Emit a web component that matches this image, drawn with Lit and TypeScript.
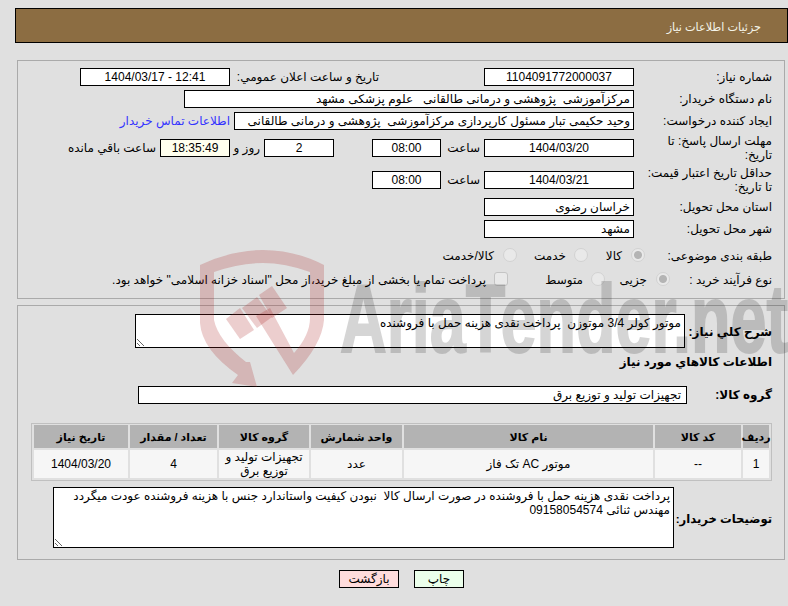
import { LitElement, html, css, svg } from 'lit';
import { customElement } from 'lit/decorators.js';

const columns = ['ردیف', 'کد کالا', 'نام کالا', 'واحد شمارش', 'گروه کالا', 'تعداد / مقدار', 'تاریخ نیاز'];
const items = [['1', '--', 'موتور AC تک فاز', 'عدد', 'تجهیزات تولید و توزیع برق', '4', '1404/03/20']];

@customElement('app-root')
export class AppRoot extends LitElement {
  static styles = css`
    :host {
      display: block;
      position: relative;
      width: 788px;
      height: 606px;
      overflow: hidden;
      background: #e0e0e0;
      font-family: 'Liberation Sans', 'DejaVu Sans', sans-serif;
      font-size: 12px;
      line-height: 14px;
      color: #000;
    }

    .page {
      direction: rtl;
      padding-top: 8px;
    }

    .title {
      height: 35px;
      box-sizing: border-box;
      margin-left: 15px;
      padding: 11px 26px 0 0;
      background: #8c6d42;
      border: 1px solid #000;
      color: #f4f4e8;
      font-size: 11.2px;
    }

    .panel {
      box-sizing: border-box;
      width: 768px;
      margin-right: 3px;
      border: 1px solid #aaa;
    }

    .info {
      height: 239px;
      margin-top: 17px;
      padding: 7px 12px 0 0;
      display: flex;
      flex-direction: column;
      gap: 4px;
    }

    .row {
      display: flex;
      align-items: center;
      min-height: 18px;
      white-space: nowrap;
    }

    .tall {
      height: 28px;
    }

    .label {
      flex: none;
      width: 138px;
    }

    .field {
      flex: none;
      box-sizing: border-box;
      height: 18px;
      width: 150px;
      padding: 0 3px;
      background: #fff;
      border: 1px solid #000;
      line-height: 17px;
      white-space: pre;
      overflow: hidden;
    }

    .center {
      text-align: center;
    }

    .wide-a {
      width: 450px;
    }

    .wide-b {
      width: 400px;
    }

    .clock {
      width: 69px;
    }

    .days {
      width: 70px;
      margin-right: 38px;
    }

    .left {
      width: 70px;
      background: #ffffee;
    }

    .hour {
      flex: none;
      width: 34px;
      margin: 0 4px 0 5px;
    }

    .unit-day {
      flex: none;
      width: 22px;
      margin: 0 4px 0 8px;
    }

    .remain {
      margin-right: 4px;
    }

    .announce {
      flex: none;
      width: 149px;
      margin-right: 105px;
    }

    .link {
      margin-right: 4px;
      color: #3333ff;
    }

    .topic {
      margin-top: 5px;
    }

    .process {
      margin-top: 2px;
    }

    .topic-label {
      flex: none;
      width: 127px;
    }

    .process-label {
      flex: none;
      width: 102px;
    }

    input {
      appearance: none;
      flex: none;
      box-sizing: border-box;
      width: 14px;
      height: 14px;
      margin: -3px 0 0;
      background: #e9e9e9;
      border: 1px solid #d2d2d2;
      border-radius: 50%;
    }

    input.on {
      background: radial-gradient(circle, #b4b4b4 0 3.5px, #e9e9e9 4.5px);
    }

    input.box {
      border-radius: 3px;
      border-color: #c4c4c4;
    }

    .opt {
      flex: none;
      margin-right: 8px;
    }

    .o-kala {
      width: 34px;
      margin-right: 9px;
    }

    .o-khedmat {
      width: 49px;
    }

    .o-both {
      margin-right: 9px;
    }

    .o-joz {
      width: 42px;
      margin-right: 9px;
    }

    .o-mot {
      width: 75px;
    }

    .needs {
      height: 255px;
      margin-top: 6px;
      padding: 8px 12px 0 0;
    }

    .bold {
      font-weight: bold;
    }

    textarea {
      display: block;
      flex: none;
      box-sizing: border-box;
      margin: 0;
      padding: 1px 3px;
      background: #fff;
      border: 1px solid #000;
      border-radius: 0;
      font: inherit;
      color: #000;
      outline: none;
    }

    .desc {
      width: 550px;
      height: 34px;
    }

    .need-label {
      flex: none;
      width: 87px;
      margin-top: 2px;
    }

    .heading {
      margin-top: 7px;
      height: 14px;
    }

    .group {
      margin-top: 17px;
    }

    .group-label {
      flex: none;
      width: 85px;
    }

    .group .field {
      width: 549px;
      padding-right: 5px;
    }

    .goods {
      display: grid;
      grid-template-columns: 26px 86px 249px 91px 90px 87px 94px;
      gap: 2px;
      width: 735px;
      margin-top: 19px;
      padding: 1px 2px 2px;
      border: 1px solid #c0c0c0;
      text-align: center;
    }

    .goods div {
      display: flex;
      align-items: center;
      justify-content: center;
    }

    .head {
      height: 23px;
      background: #b3b3b3;
      font-size: 11px;
      font-weight: bold;
      white-space: nowrap;
    }

    .cell {
      height: 28px;
      background: #f6f6f6;
    }

    .notes-row {
      margin-top: 6px;
    }

    .notes-label {
      flex: none;
      width: 98px;
      margin-top: 2px;
      font-size: 11.6px;
    }

    .notes {
      width: 621px;
      height: 61px;
    }

    .actions {
      display: flex;
      gap: 15px;
      padding: 10px 324px 0 0;
    }

    button {
      box-sizing: border-box;
      height: 18px;
      padding: 0;
      border: 1px solid #000;
      font: inherit;
      color: #000;
    }

    .print {
      width: 50px;
      background: #ebffeb;
    }

    .back {
      width: 60px;
      background: #ffdcdc;
    }

    .mark {
      position: absolute;
      inset: 0;
      pointer-events: none;
    }

    .mark-text {
      font-family: 'Liberation Sans', sans-serif;
      font-size: 96px;
      font-weight: bold;
      fill: #000;
      stroke: #000;
      stroke-width: 2px;
      opacity: 0.16;
    }

    .mark-logo {
      fill: rgba(170, 30, 30, 0.22);
    }
  `;

  private watermark() {
    return html`<svg class="mark" width="788" height="606" viewBox="0 0 788 606">
      ${svg`
        <path class="mark-logo" d="M200 265Q232 250 263 250Q295 250 324 265L324 320Q322 345 293 375L256 316L270 308L294 353Q310 335 310 318L310 272Q285 263 263 263Q240 263 214 272L214 320Q218 340 246 362L250 362L257 387L232 383L238 375Q202 350 200 323Z" />
        <path class="mark-logo" d="M226 319L240 308L254 330L240 339Z" />
        <path class="mark-logo" d="M242 308L257 297L272 317L257 328Z" />
        <path class="mark-logo" d="M259 295L272 286L287 308L272 318Z" />
        <text class="mark-text" x="340" y="352" textLength="448" lengthAdjust="spacingAndGlyphs">AriaTender.net</text>
      `}
    </svg>`;
  }

  render() {
    return html`
      <div class="page">
        <div class="title">جزئیات اطلاعات نیاز</div>

        <section class="panel info">
          <div class="row">
            <span class="label">شماره نیاز:</span>
            <span class="field center">1104091772000037</span>
            <span class="announce">تاریخ و ساعت اعلان عمومي:</span>
            <span class="field center" dir="ltr">1404/03/17 - 12:41</span>
          </div>
          <div class="row">
            <span class="label">نام دستگاه خریدار:</span>
            <span class="field wide-a">مرکزآموزشی  پژوهشی و درمانی طالقانی   علوم پزشکی مشهد</span>
          </div>
          <div class="row">
            <span class="label">ایجاد کننده درخواست:</span>
            <span class="field wide-b">وحید حکیمی تبار مسئول کارپردازی مرکزآموزشی  پژوهشی و درمانی طالقانی</span>
            <span class="link">اطلاعات تماس خریدار</span>
          </div>
          <div class="row tall">
            <span class="label">مهلت ارسال پاسخ: تا<br />تاریخ:</span>
            <span class="field center">1404/03/20</span>
            <span class="hour">ساعت</span>
            <span class="field center clock">08:00</span>
            <span class="field center days">2</span>
            <span class="unit-day">روز و</span>
            <span class="field center left">18:35:49</span>
            <span class="remain">ساعت باقي مانده</span>
          </div>
          <div class="row tall">
            <span class="label">حداقل تاریخ اعتبار قیمت:<br />تا تاریخ:</span>
            <span class="field center">1404/03/21</span>
            <span class="hour">ساعت</span>
            <span class="field center clock">08:00</span>
          </div>
          <div class="row">
            <span class="label">استان محل تحویل:</span>
            <span class="field">خراسان رضوی</span>
          </div>
          <div class="row">
            <span class="label">شهر محل تحویل:</span>
            <span class="field">مشهد</span>
          </div>
          <div class="row topic">
            <span class="topic-label">طبقه بندی موضوعی:</span>
            <input class="on" type="radio" disabled />
            <span class="opt o-kala">کالا</span>
            <input type="radio" disabled />
            <span class="opt o-khedmat">خدمت</span>
            <input type="radio" disabled />
            <span class="opt o-both">کالا/خدمت</span>
          </div>
          <div class="row process">
            <span class="process-label">نوع فرآیند خرید :</span>
            <input class="on" type="radio" disabled />
            <span class="opt o-joz">جزیی</span>
            <input type="radio" disabled />
            <span class="opt o-mot">متوسط</span>
            <input class="box" type="checkbox" disabled />
            <span class="opt">پرداخت تمام یا بخشی از مبلغ خرید،از محل "اسناد خزانه اسلامی" خواهد بود.</span>
          </div>
        </section>

        <section class="panel needs">
          <div class="row">
            <span class="bold need-label">شرح کلي نیاز:</span>
            <textarea class="desc" readonly>موتور کولر 3/4 موتوزن  پرداخت نقدی هزینه حمل با فروشنده</textarea>
          </div>
          <div class="bold heading">اطلاعات کالاهاي مورد نیاز</div>
          <div class="row group">
            <span class="bold group-label">گروه کالا:</span>
            <span class="field">تجهیزات تولید و توزیع برق</span>
          </div>
          <div class="goods">
            ${columns.map((c) => html`<div class="head">${c}</div>`)}
            ${items.map((row) => row.map((c) => html`<div class="cell">${c}</div>`))}
          </div>
          <div class="row notes-row">
            <span class="bold notes-label">توضیحات خریدار:</span>
            <textarea class="notes" readonly>پرداخت نقدی هزینه حمل با فروشنده در صورت ارسال کالا  نبودن کیفیت واستاندارد جنس با هزینه فروشنده عودت میگردد
مهندس ثنائی 09158054574</textarea>
          </div>
        </section>

        <div class="actions">
          <button class="print">چاپ</button>
          <button class="back">بازگشت</button>
        </div>
      </div>
      ${this.watermark()}
    `;
  }
}

declare global {
  interface HTMLElementTagNameMap {
    'app-root': AppRoot;
  }
}
